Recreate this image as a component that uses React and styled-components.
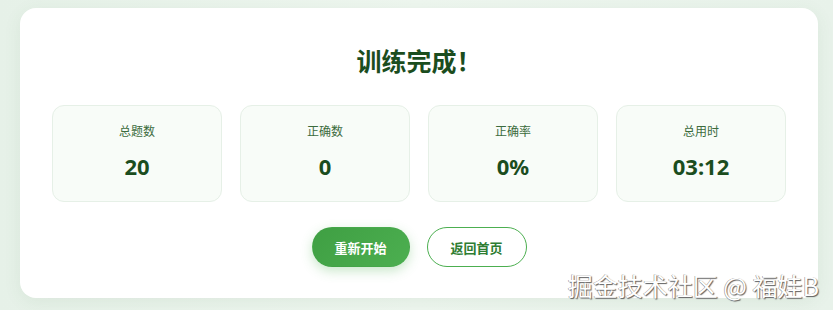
import styled, { createGlobalStyle } from "styled-components";

const stats = [
  { label: "总题数", value: "20" },
  { label: "正确数", value: "0" },
  { label: "正确率", value: "0%" },
  { label: "总用时", value: "03:12" },
];

export default function App() {
  return (
    <>
      <GlobalStyle />
      <Page>
        <ResultCard>
          <Title>训练完成！</Title>
          <StatGrid>
            {stats.map((s) => (
              <StatBox key={s.label}>
                <StatLabel>{s.label}</StatLabel>
                <StatValue>{s.value}</StatValue>
              </StatBox>
            ))}
          </StatGrid>
          <Actions>
            <Button $primary>重新开始</Button>
            <Button>返回首页</Button>
          </Actions>
        </ResultCard>
        <Watermark>掘金技术社区 @ 福娃B</Watermark>
      </Page>
    </>
  );
}

const GlobalStyle = createGlobalStyle`
  html, body {
    margin: 0;
    padding: 0;
    background: #e9f3eb;
    font-family: "Noto Sans", "Noto Sans CJK SC", sans-serif;
  }
`;

const Page = styled.div`
  position: relative;
  width: 833px;
  height: 310px;
  padding: 8px 15px 0 20px;
  box-sizing: border-box;
  background: linear-gradient(90deg, #e6f1e8 0%, #eef6ef 50%, #e8f2ea 100%);
  overflow: hidden;
`;

const ResultCard = styled.div`
  background: #ffffff;
  border-radius: 16px;
  padding: 36px 32px 31px;
  box-shadow: 0 4px 18px rgba(60, 120, 70, 0.08);
  display: flex;
  flex-direction: column;
  align-items: center;
`;

const Title = styled.h1`
  margin: 0;
  font-size: 25px;
  line-height: 32px;
  font-weight: 700;
  color: #1b4d1e;
  font-family: "Noto Sans CJK SC", sans-serif;
`;

const StatGrid = styled.div`
  margin-top: 29px;
  width: 100%;
  display: grid;
  grid-template-columns: repeat(4, 1fr);
  gap: 18px;
`;

const StatBox = styled.div`
  height: 97px;
  box-sizing: border-box;
  background: #f8fcf8;
  border: 1px solid #e6f0e7;
  border-radius: 12px;
  display: flex;
  flex-direction: column;
  align-items: center;
  padding-top: 15px;
`;

const StatLabel = styled.div`
  font-size: 12px;
  line-height: 20px;
  color: #3b6b3d;
  font-family: "Noto Sans CJK SC", sans-serif;
`;

const StatValue = styled.div`
  margin-top: 10px;
  font-size: 22px;
  line-height: 30px;
  font-weight: 700;
  color: #1b4d1e;
`;

const Actions = styled.div`
  margin-top: 25px;
  display: flex;
  gap: 17px;
`;

const Button = styled.button`
  height: 40px;
  width: ${(p) => (p.$primary ? "98px" : "100px")};
  border-radius: 20px;
  font-size: 13px;
  font-weight: 700;
  font-family: "Noto Sans CJK SC", sans-serif;
  cursor: pointer;
  border: 1px solid ${(p) => (p.$primary ? "transparent" : "#4caf50")};
  background: ${(p) =>
    p.$primary ? "linear-gradient(135deg, #3f9f43, #4caf50)" : "#ffffff"};
  color: ${(p) => (p.$primary ? "#ffffff" : "#2e7d32")};
  box-shadow: ${(p) =>
    p.$primary ? "0 4px 12px rgba(76, 175, 80, 0.3)" : "none"};
`;

const Watermark = styled.div`
  position: absolute;
  right: 14px;
  bottom: 10px;
  font-size: 25px;
  line-height: 30px;
  color: #ffffff;
  font-family: "Noto Sans CJK SC", sans-serif;
  text-shadow: 1px 1px 1px #5f5f5f, -0.5px -0.5px 0 #8a8a8a;
`;
